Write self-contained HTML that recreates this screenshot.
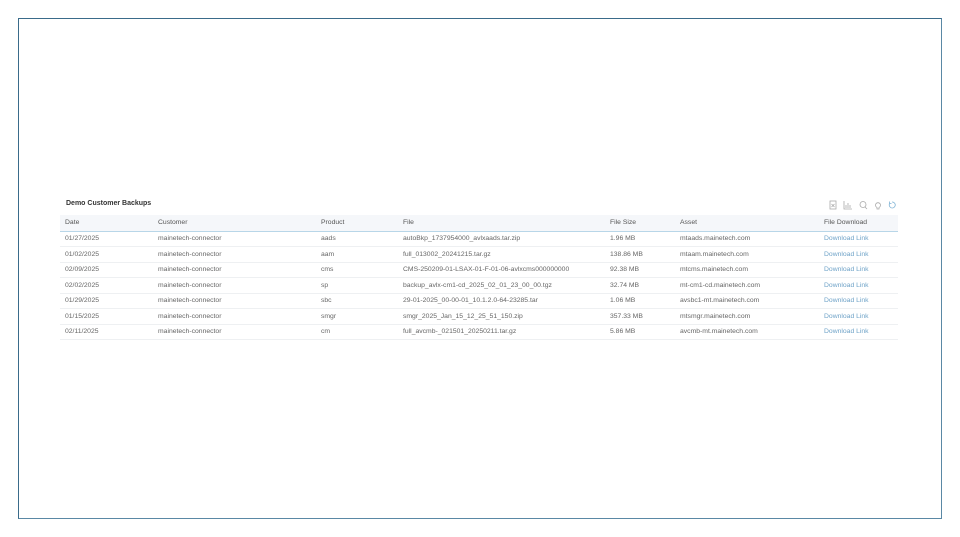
<!DOCTYPE html>
<html><head><meta charset="utf-8"><style>
body{margin:0;width:960px;height:537px;background:#fff;font-family:"Liberation Sans",sans-serif;position:relative;overflow:hidden}
.frame{position:absolute;left:18px;top:18px;width:922px;height:499px;border:1px solid #5a88a5;border-top-color:#3a6b8a;border-left-color:#3a6b8a}
.title{position:absolute;left:66px;top:200px;font-size:7px;font-weight:bold;color:#333}
.hdr{position:absolute;left:60px;top:215px;width:838px;height:16px;background:#f5f7fa;border-bottom:1px solid #b8d6e8}
.row{position:absolute;left:60px;width:838px;height:15px;border-bottom:1px solid #eef0f2}
.c{position:absolute;font-size:6.8px;color:#666;white-space:nowrap;line-height:16px}
.hdr .c{line-height:16px;color:#555}
.lk{color:#6fa3c8}
.ic{position:absolute;top:200px}
</style></head><body>
<div class="frame"></div>
<div class="title">Demo Customer Backups</div>
<svg class="ic" style="left:828px" width="72" height="11" fill="none" stroke="#aaa" stroke-width="0.8">
<rect x="2" y="1" width="6" height="8"/><path d="M3.5 4l3 3M6.5 4l-3 3"/>
<path d="M16 1v8h8M18 8V5M20 8V3M22 8V5"/>
<circle cx="35" cy="4.5" r="3"/><path d="M37 7l2 2"/>
<path d="M49 7.5a2.5 2.5 0 1 1 2 0v1.5h-2z"/>
<path stroke="#7fb3d5" d="M64 2a3 3 0 1 1-2 1M61.5 1.5v2h2"/>
</svg>
<div class="hdr">
<span class="c" style="left:5px">Date</span><span class="c" style="left:98px">Customer</span><span class="c" style="left:261px">Product</span><span class="c" style="left:343px">File</span><span class="c" style="left:550px">File Size</span><span class="c" style="left:620px">Asset</span><span class="c" style="left:764px">File Download</span>
</div>
<div class="row" style="top:231px"><span class="c" style="left:5px">01/27/2025</span><span class="c" style="left:98px">mainetech-connector</span><span class="c" style="left:261px">aads</span><span class="c" style="left:343px">autoBkp_1737954000_avlxaads.tar.zip</span><span class="c" style="left:550px">1.96 MB</span><span class="c" style="left:620px">mtaads.mainetech.com</span><span class="c lk" style="left:764px">Download Link</span></div>
<div class="row" style="top:246.5px"><span class="c" style="left:5px">01/02/2025</span><span class="c" style="left:98px">mainetech-connector</span><span class="c" style="left:261px">aam</span><span class="c" style="left:343px">full_013002_20241215.tar.gz</span><span class="c" style="left:550px">138.86 MB</span><span class="c" style="left:620px">mtaam.mainetech.com</span><span class="c lk" style="left:764px">Download Link</span></div>
<div class="row" style="top:262px"><span class="c" style="left:5px">02/09/2025</span><span class="c" style="left:98px">mainetech-connector</span><span class="c" style="left:261px">cms</span><span class="c" style="left:343px">CMS-250209-01-LSAX-01-F-01-06-avlxcms000000000</span><span class="c" style="left:550px">92.38 MB</span><span class="c" style="left:620px">mtcms.mainetech.com</span><span class="c lk" style="left:764px">Download Link</span></div>
<div class="row" style="top:277.5px"><span class="c" style="left:5px">02/02/2025</span><span class="c" style="left:98px">mainetech-connector</span><span class="c" style="left:261px">sp</span><span class="c" style="left:343px">backup_avlx-cm1-cd_2025_02_01_23_00_00.tgz</span><span class="c" style="left:550px">32.74 MB</span><span class="c" style="left:620px">mt-cm1-cd.mainetech.com</span><span class="c lk" style="left:764px">Download Link</span></div>
<div class="row" style="top:293px"><span class="c" style="left:5px">01/29/2025</span><span class="c" style="left:98px">mainetech-connector</span><span class="c" style="left:261px">sbc</span><span class="c" style="left:343px">29-01-2025_00-00-01_10.1.2.0-64-23285.tar</span><span class="c" style="left:550px">1.06 MB</span><span class="c" style="left:620px">avsbc1-mt.mainetech.com</span><span class="c lk" style="left:764px">Download Link</span></div>
<div class="row" style="top:308.5px"><span class="c" style="left:5px">01/15/2025</span><span class="c" style="left:98px">mainetech-connector</span><span class="c" style="left:261px">smgr</span><span class="c" style="left:343px">smgr_2025_Jan_15_12_25_51_150.zip</span><span class="c" style="left:550px">357.33 MB</span><span class="c" style="left:620px">mtsmgr.mainetech.com</span><span class="c lk" style="left:764px">Download Link</span></div>
<div class="row" style="top:324px"><span class="c" style="left:5px">02/11/2025</span><span class="c" style="left:98px">mainetech-connector</span><span class="c" style="left:261px">cm</span><span class="c" style="left:343px">full_avcmb-_021501_20250211.tar.gz</span><span class="c" style="left:550px">5.86 MB</span><span class="c" style="left:620px">avcmb-mt.mainetech.com</span><span class="c lk" style="left:764px">Download Link</span></div>
</body></html>
